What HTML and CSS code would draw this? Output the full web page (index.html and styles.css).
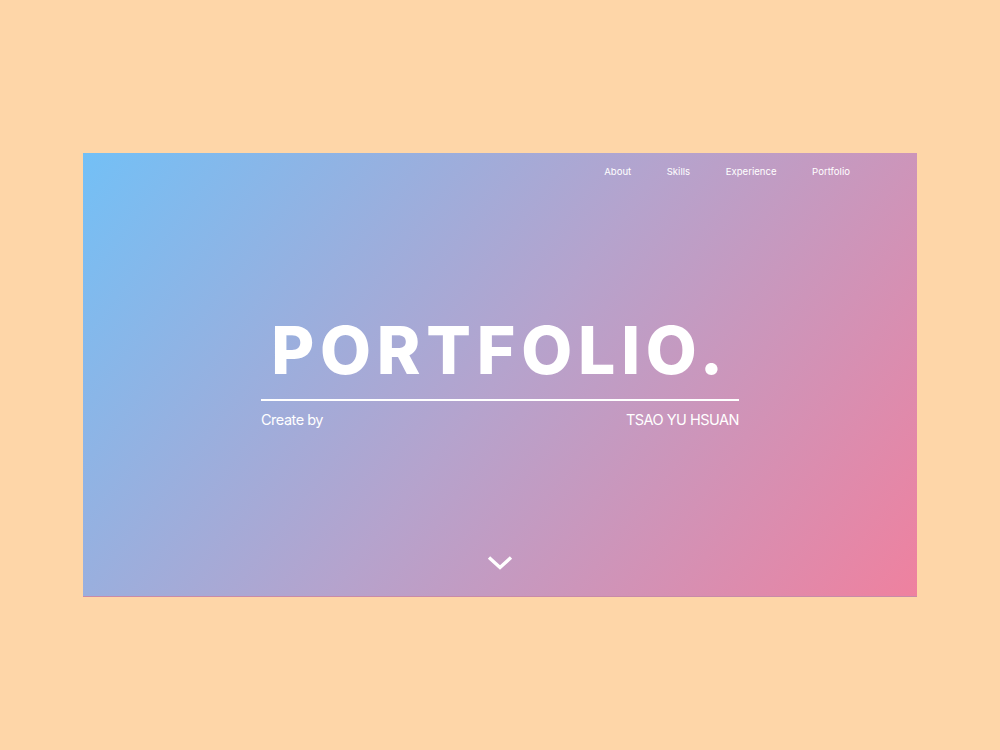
FILE: index.html
```html
<!DOCTYPE html>
<html lang="en">
<head>
<meta charset="utf-8">
<title>Portfolio</title>
<link rel="stylesheet" href="styles.css">
</head>
<body>
<section class="hero">
  <nav class="nav">
    <a href="#about">About</a>
    <a href="#skills">Skills</a>
    <a href="#experience">Experience</a>
    <a href="#portfolio">Portfolio</a>
  </nav>
  <div class="main">
    <div class="title-block">
      <h1 class="title">PORTFOLIO.</h1>
      <div class="byline">
        <span>Create by</span>
        <span>TSAO YU HSUAN</span>
      </div>
    </div>
  </div>
  <div class="down">
    <svg width="26" height="17" viewBox="0 0 26 17"><path d="M2 3.5 L13 13.5 L24 3.5" fill="none" stroke="#fff" stroke-width="3.4"/></svg>
  </div>
</section>
</body>
</html>
```
FILE: styles.css
```css
html, body { margin: 0; height: 100%; }
body {
  background: #fed6a8;
  display: flex;
  align-items: center;
  justify-content: center;
  font-family: Inter, "Liberation Sans", sans-serif;
  color: #fff;
}
.hero {
  width: 834px;
  height: 444px;
  background: linear-gradient(128deg, #73c0f6 0%, #b5a3cd 50%, #ef819f 100%);
  display: flex;
  flex-direction: column;
  box-sizing: border-box;
  border-bottom: 1px solid #c88aa8;
}
.nav {
  display: flex;
  justify-content: flex-end;
  gap: 35.5px;
  padding: 13px 67px 0 0;
  font-size: 9.6px;
  height: 24px;
  box-sizing: border-box;
}
.nav a { color: #fff; text-decoration: none; }
.main {
  flex: 1;
  display: flex;
  justify-content: center;
  align-items: center;
  padding-top: 14px;
}
.title-block { width: 478px; }
.title {
  margin: 0;
  font-family: Inter, "Liberation Sans", sans-serif;
  font-weight: 800;
  font-size: 66px;
  line-height: 66px;
  letter-spacing: 5.8px;
  text-align: center;
  padding-left: 0;
  border-bottom: 2px solid #fff;
  padding-bottom: 16px;
}
.byline {
  display: flex;
  justify-content: space-between;
  font-size: 14.5px;
  margin-top: 10px;
  letter-spacing: -0.5px;
}
.down {
  display: flex;
  justify-content: center;
  padding-bottom: 25px;
}
```
